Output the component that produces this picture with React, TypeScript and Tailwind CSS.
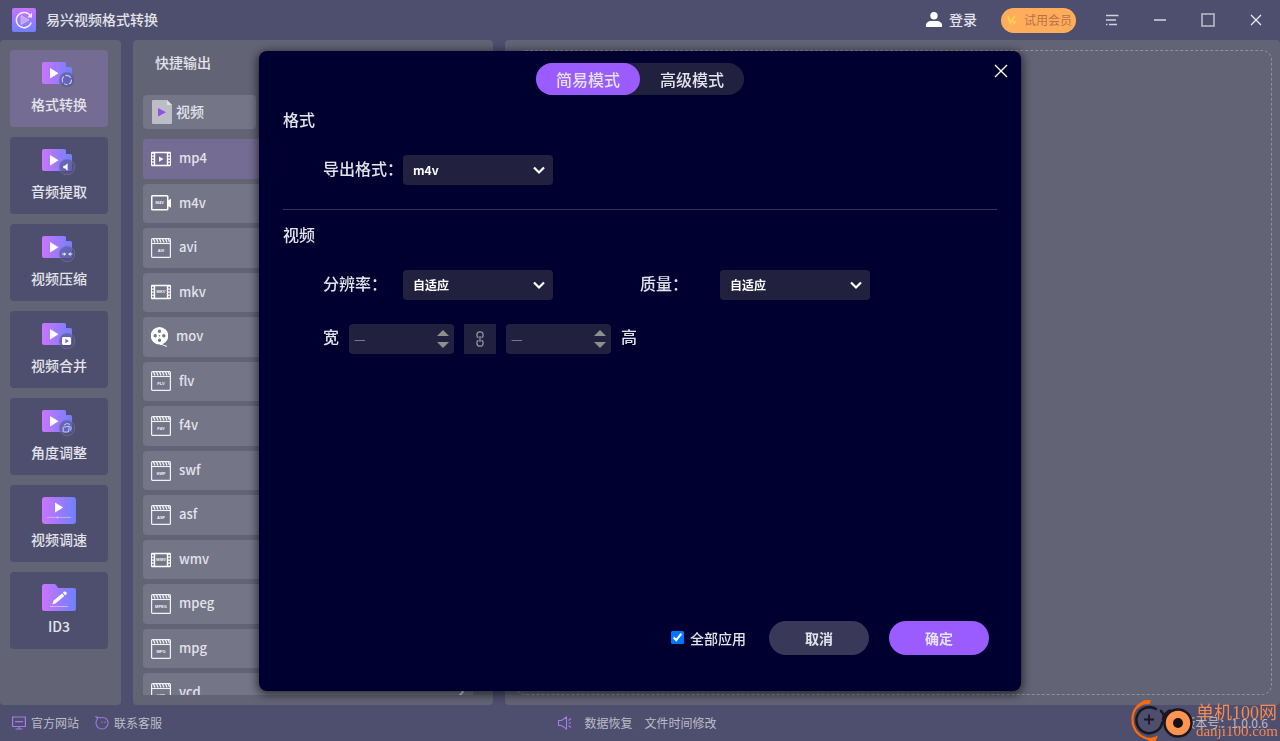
import type { ReactNode } from "react";

type ToolKind = "convert" | "audio" | "compress" | "merge" | "rotate" | "speed" | "tag";
type FormatKind = "play" | "camera" | "clap" | "film" | "reel";

const tools: { label: string; kind: ToolKind }[] = [
  { label: "格式转换", kind: "convert" },
  { label: "音频提取", kind: "audio" },
  { label: "视频压缩", kind: "compress" },
  { label: "视频合并", kind: "merge" },
  { label: "角度调整", kind: "rotate" },
  { label: "视频调速", kind: "speed" },
  { label: "ID3", kind: "tag" },
];

const formats: { name: string; kind: FormatKind; tag: string }[] = [
  { name: "mp4", kind: "play", tag: "" },
  { name: "m4v", kind: "camera", tag: "M4V" },
  { name: "avi", kind: "clap", tag: "AVI" },
  { name: "mkv", kind: "film", tag: "MKV" },
  { name: "mov", kind: "reel", tag: "" },
  { name: "flv", kind: "clap", tag: "FLV" },
  { name: "f4v", kind: "clap", tag: "F4V" },
  { name: "swf", kind: "clap", tag: "SWF" },
  { name: "asf", kind: "clap", tag: "ASF" },
  { name: "wmv", kind: "film", tag: "WMV" },
  { name: "mpeg", kind: "clap", tag: "MPEG" },
  { name: "mpg", kind: "clap", tag: "MPG" },
  { name: "vcd", kind: "clap", tag: "VCD" },
];

function Gradients() {
  return (
    <svg className="absolute size-0" aria-hidden="true">
      <defs>
        <linearGradient id="violet" x1="0" y1="0" x2="1" y2="0">
          <stop offset="0" stopColor="#cb74ff" />
          <stop offset="1" stopColor="#6f80ff" />
        </linearGradient>
        <linearGradient id="violetDown" x1="0" y1="0" x2="0" y2="1">
          <stop offset="0" stopColor="#c873ff" />
          <stop offset="1" stopColor="#6f80ff" />
        </linearGradient>
      </defs>
    </svg>
  );
}

function ToolGlyph({ kind }: { kind: ToolKind }) {
  switch (kind) {
    case "convert":
      return (
        <g fill="none" stroke="#c3ccff" strokeWidth="1.1">
          <path d="M20.9 20.200a4.600 4.600 0 0 1 1-5.700M23.500 13.600a4.600 4.600 0 0 1 5.200 2.200M29.500 17.600a4.600 4.600 0 0 1-2.500 4.500M25.500 22.600a4.600 4.600 0 0 1-3.300-1" />
        </g>
      );
    case "audio":
      return <path d="M21.600 17h1.400l2.300-2.300v6.600L23 19h-1.400z" fill="#fff" stroke="#fff" strokeWidth=".6" />;
    case "compress":
      return (
        <g fill="#dfe3ff">
          <path d="M20 17.600h1.800v-1.300l2.600 1.800-2.600 1.800v-1.300H20z" />
          <path d="M30.400 17.600h-1.800v-1.300L26 18.100l2.600 1.800v-1.300h1.800z" />
        </g>
      );
    case "merge":
      return (
        <g>
          <rect x="20" y="14" width="9" height="8" rx="1.4" fill="#fff" />
          <path d="M23.3 15.8v4.4l3.500-2.200z" fill="#6b6fe0" />
        </g>
      );
    case "rotate":
      return (
        <g fill="none" stroke="#c3cbff" strokeWidth="1">
          <path d="M21.2 17.2l6.200-1-1 5.800h-5.200z" />
          <path d="M22 15.2a4.6 4.6 0 0 1 6-.8M28.8 16.4a4.6 4.6 0 0 1-.3 4" />
        </g>
      );
    default:
      return null;
  }
}

function ToolIcon({ kind }: { kind: ToolKind }) {
  if (kind === "speed") {
    return (
      <svg width="34" height="28" viewBox="0 0 34 28" aria-hidden="true">
        <rect width="34" height="27" rx="3" fill="url(#violet)" />
        <path d="M13 5.500v10l8.200-5z" fill="#fff" />
        <path d="M5 20.500h24" stroke="#c8a8ff" strokeWidth="1" />
        <circle cx="15.500" cy="20.500" r="1" fill="#d9c4ff" />
      </svg>
    );
  }
  if (kind === "tag") {
    return (
      <svg width="34" height="28" viewBox="0 0 34 28" aria-hidden="true">
        <path d="M2.500 0h10.200c1.600 0 2.600 4 4.200 4H32a2 2 0 0 1 2 2v18.500a2.500 2.500 0 0 1-2.500 2.500h-29A2.500 2.500 0 0 1 0 24.500v-22A2.500 2.500 0 0 1 2.500 0z" fill="url(#violet)" />
        <path d="M10.300 20.500l1.200-3.800 8.600-7.300 2.200 2.500-8.500 7.400z" fill="#fff" />
        <path d="M20.900 8.700l1-.9a1.800 1.800 0 0 1 2.400 2.600l-1.200.900z" fill="#fff" />
        <path d="M8 22.500h18" stroke="#cdb4ff" strokeWidth="1" />
      </svg>
    );
  }
  return (
    <svg width="34" height="28" viewBox="0 0 34 28" aria-hidden="true">
      <path d="M2 0h20.500A1.500 1.500 0 0 1 24 1.500V5h4.500A1.500 1.500 0 0 1 30 6.500V20a2 2 0 0 1-2 2H2a2 2 0 0 1-2-2V2a2 2 0 0 1 2-2z" fill="url(#violet)" />
      <path d="M8 6v10.500l8.500-5.200z" fill="#fff" />
      <circle cx="25" cy="18" r="7.800" fill="#55558a" fillOpacity=".62" stroke="#77779c" strokeOpacity=".6" />
      <ToolGlyph kind={kind} />
    </svg>
  );
}

function FormatIcon({ kind, tag }: { kind: FormatKind; tag: string }) {
  const label = (y: number, x = 10) => (
    <text x={x} y={y} fontSize="4" fontWeight="700" textAnchor="middle" fill="#f4f4f8" fontFamily="Liberation Sans, sans-serif">
      {tag}
    </text>
  );
  if (kind === "reel") {
    return (
      <svg width="17" height="20" viewBox="0 0 17 20" className="shrink-0" aria-hidden="true">
        <path
          fillRule="evenodd"
          fill="#fff"
          d="M8.500 0a8.500 8.500 0 1 1 0 17.500 8.500 8.500 0 0 1 0-17.500zM8.500 2.500a1.700 1.700 0 1 0 0 3.400 1.700 1.700 0 0 0 0-3.400zM4.200 7a1.700 1.700 0 1 0 0 3.400A1.700 1.700 0 0 0 4.200 7zM12.800 7a1.700 1.700 0 1 0 0 3.400 1.700 1.700 0 0 0 0-3.400zM8.500 11.500a1.700 1.700 0 1 0 0 3.400 1.700 1.700 0 0 0 0-3.400zM8.500 7.900a.8.8 0 1 0 0 1.600.8.800 0 0 0 0-1.600z"
        />
        <path d="M9 17.300c3 0 4 1.700 7 2" stroke="#fff" strokeWidth="1" fill="none" />
      </svg>
    );
  }
  if (kind === "camera") {
    return (
      <svg width="20" height="16" viewBox="0 0 20 16" className="shrink-0" aria-hidden="true">
        <rect x=".75" y=".75" width="16" height="14" rx=".8" fill="none" stroke="#fff" strokeWidth="1.500" />
        <path d="M17 5.500l3-1.700v9l-3-1.700z" fill="#fff" />
        {label(9.3, 8.7)}
      </svg>
    );
  }
  if (kind === "clap") {
    return (
      <svg width="20" height="20" viewBox="0 0 20 20" className="shrink-0" aria-hidden="true">
        <rect x=".6" y=".6" width="18.800" height="18.800" rx="1" fill="none" stroke="#f2f2f6" strokeWidth="1.200" />
        <path d="M.5 5.500h19" stroke="#f2f2f6" strokeWidth="1.100" />
        <path d="M2.500 1l1.500 3.500M5.500 1L7 4.500M8.500 1l1.500 3.500M11.500 1L13 4.500M14.500 1L16 4.500M17.200 1l1.300 3" stroke="#f2f2f6" strokeWidth="1.300" />
        {label(13.8)}
      </svg>
    );
  }
  return (
    <svg width="20" height="16" viewBox="0 0 20 16" className="shrink-0" aria-hidden="true">
      <path
        fillRule="evenodd"
        fill="#fff"
        d="M1 .8h18a1 1 0 0 1 1 1v12.400a1 1 0 0 1-1 1H1a1 1 0 0 1-1-1V1.800a1 1 0 0 1 1-1zM4.200 2.200v11.600h11.600V2.200zM1 2.800v1.600h1.800V2.800zM1 5.800v1.600h1.800V5.800zM1 8.800v1.600h1.800V8.800zM1 11.800v1.600h1.800v-1.600zM17.200 2.800v1.600H19V2.800zM17.200 5.800v1.600H19V5.800zM17.200 8.800v1.600H19V8.800zM17.200 11.800v1.600H19v-1.600z"
      />
      {kind === "play" ? <path d="M8 5.500v5.200l4.500-2.600z" fill="#fff" /> : label(9.4)}
    </svg>
  );
}

function WindowButton({ label, children }: { label: string; children: ReactNode }) {
  return (
    <button type="button" aria-label={label} className="flex h-10 w-12 items-center justify-center">
      {children}
    </button>
  );
}

function TitleBar() {
  return (
    <header className="flex h-10 shrink-0 items-center pl-3">
      <svg width="24" height="24" viewBox="0 0 24 24" aria-hidden="true">
        <rect width="24" height="24" rx="2" fill="url(#violetDown)" />
        <path d="M18.600 8.200A7.600 7.600 0 1 0 19.200 14.500" fill="none" stroke="#f6eaff" strokeWidth="1.500" />
        <path d="M20 4.800v4.600h-4.600z" fill="#f6eaff" />
        <path d="M9 7.500v9l8-4.500z" fill="#d9bcff" fillOpacity=".65" stroke="#e6d2ff" strokeWidth=".6" />
      </svg>
      <h1 className="ml-[10px] pb-[2px] text-sm font-medium">易兴视频格式转换</h1>
      <div className="ml-auto flex items-center">
        <button type="button" className="mr-6 flex items-center gap-[7px] text-sm font-medium">
          <svg width="16" height="17" viewBox="0 0 16 17" fill="#fff" aria-hidden="true">
            <circle cx="8" cy="3.700" r="3.700" />
            <path d="M0 15v-2c0-2.500 3-4 5-4h6c2 0 5 1.500 5 4v2z" />
          </svg>
          <span className="pb-[2px]">登录</span>
        </button>
        <button type="button" className="mr-3 flex h-[25px] items-center gap-[7px] rounded-full bg-[#ffad5b] pr-1 pl-[6px] text-xs text-[#b9704c]">
          <svg width="10" height="10" viewBox="0 0 10 10" fill="none" stroke="#ffd24e" aria-hidden="true">
            <path d="M1 1l2.300 6.500L8 .8" strokeWidth="2" />
            <path d="M5.500 5.500l3.500 3M6 9l3-3" strokeWidth="1.300" />
          </svg>
          试用会员
        </button>
        <WindowButton label="菜单">
          <svg width="14" height="12" viewBox="0 0 14 12" stroke="#d2d2dc" strokeWidth="1.500" aria-hidden="true">
            <path d="M1 1.500h12.500M1 6h10M1 10.500h1.500M4 10.500h8" />
          </svg>
        </WindowButton>
        <WindowButton label="最小化">
          <svg width="14" height="14" viewBox="0 0 14 14" stroke="#d8d8e0" strokeWidth="1.500" aria-hidden="true">
            <path d="M1 7h12" />
          </svg>
        </WindowButton>
        <WindowButton label="最大化">
          <svg width="14" height="14" viewBox="0 0 14 14" fill="none" stroke="#c0c0cc" strokeWidth="1.500" aria-hidden="true">
            <rect x="1" y="1" width="12" height="12" />
          </svg>
        </WindowButton>
        <WindowButton label="关闭">
          <svg width="12" height="12" viewBox="0 0 12 12" stroke="#f0f0f4" strokeWidth="1.200" aria-hidden="true">
            <path d="M1 1l10 10M11 1L1 11" />
          </svg>
        </WindowButton>
      </div>
    </header>
  );
}

function Sidebar() {
  return (
    <nav className="flex w-[121px] shrink-0 flex-col gap-[10px] rounded bg-[#636376] py-[10px] pr-[13px] pl-[10px]">
      {tools.map((tool, index) => (
        <button
          key={tool.kind}
          type="button"
          className={
            index === 0
              ? "flex h-[77px] flex-col items-center rounded-sm bg-[#756c93] pt-3 text-sm font-medium"
              : "flex h-[77px] flex-col items-center rounded-sm bg-[#4e4e6f] pt-3 text-sm font-medium"
          }
        >
          <ToolIcon kind={tool.kind} />
          <span className="mt-1 leading-5">{tool.label}</span>
        </button>
      ))}
    </nav>
  );
}

function FormatPanel() {
  return (
    <section className="flex w-[360px] shrink-0 flex-col rounded bg-[#636376] px-[10px] pb-[10px]">
      <h2 className="mt-3 ml-3 text-sm leading-5 font-medium">快捷输出</h2>
      <button type="button" className="mt-[23px] flex h-[34px] w-[113px] shrink-0 items-center gap-1 rounded bg-[#757588] pl-[9px] text-sm font-medium">
        <svg width="20" height="24" viewBox="0 0 20 24" aria-hidden="true">
          <path d="M1 0h14l5 5v18a1 1 0 0 1-1 1H1a1 1 0 0 1-1-1V1a1 1 0 0 1 1-1z" fill="#bdbdc8" />
          <path d="M15 0v5h5z" fill="#e0e0e8" />
          <path d="M6 8v8.500l8-4.300z" fill="#9150e6" />
        </svg>
        <span className="pb-[3px]">视频</span>
      </button>
      <div className="mt-[10px] min-h-0 flex-1 overflow-hidden">
        <ul className="mr-[10px] grid h-[574px] auto-rows-fr gap-[5px]">
          {formats.map((format, index) => (
            <li key={format.name} className="flex min-h-0">
              <button
                type="button"
                className={
                  index === 0
                    ? "flex flex-1 items-center gap-2 rounded bg-[#756c93] px-2 text-[13px] font-medium"
                    : "flex flex-1 items-center gap-2 rounded bg-[#757588] px-2 text-[13px] font-medium"
                }
              >
                <FormatIcon kind={format.kind} tag={format.tag} />
                <span className="pb-[2px]">{format.name}</span>
                <svg width="8" height="8" viewBox="0 0 8 8" className="ml-auto" fill="none" stroke="#e3e3ea" strokeWidth="1.500" aria-hidden="true">
                  <path d="M3 0l3 3-4 4" />
                </svg>
              </button>
            </li>
          ))}
        </ul>
      </div>
    </section>
  );
}

function FooterBar() {
  return (
    <footer className="grid h-9 shrink-0 grid-cols-[1fr_auto_1fr] items-center px-3 text-xs text-[#bdbdc7]">
      <div className="flex items-center gap-4">
        <a href="#site" className="flex items-center gap-[5px]">
          <svg width="14" height="14" viewBox="0 0 14 14" fill="none" stroke="#a77ae6" strokeWidth="1.200" aria-hidden="true">
            <path d="M.6 1h12.800v9.500H.6zM3 5.700h8M7 10.500V13M3.500 13h7" />
          </svg>
          官方网站
        </a>
        <a href="#support" className="flex items-center gap-[5px]">
          <svg width="14" height="14" viewBox="0 0 14 14" fill="none" stroke="#a077e0" strokeWidth="1.100" aria-hidden="true">
            <path d="M2.500 3A6 6 0 1 0 11.500 3C9 .8 6 1.500 4.500 1.800L1 .8zM7 5.500v1.500M10 5.500v1.500" />
          </svg>
          联系客服
        </a>
      </div>
      <div className="flex items-center gap-3 pr-[5px]">
        <svg width="14" height="14" viewBox="0 0 14 14" fill="none" stroke="#a77ae6" strokeWidth="1.100" aria-hidden="true">
          <path d="M.5 4.500h3L8.500 1v12l-5-3.500h-3zM10.500 4.500L13 2.500M10.500 7H13M10.500 9.500l2.500 2" />
        </svg>
        <a href="#recovery">数据恢复</a>
        <a href="#time">文件时间修改</a>
      </div>
      <p className="text-right">版本号：1.0.0.6</p>
    </footer>
  );
}

function SelectBox({ id, label, options }: { id: string; label: string; options: string[] }) {
  return (
    <div className="flex items-center">
      <label htmlFor={id} className="w-20 pb-[3px] text-base leading-6 font-medium whitespace-nowrap">
        {label}
      </label>
      <div className="relative">
        <select id={id} className="h-[30px] w-[150px] appearance-none rounded bg-[#22203f] pl-[10px] text-xs font-bold text-white">
          {options.map((option) => (
            <option key={option}>{option}</option>
          ))}
        </select>
        <svg width="12" height="9" viewBox="0 0 12 9" className="pointer-events-none absolute top-[11px] right-2" fill="none" stroke="#fff" strokeWidth="2.200" aria-hidden="true">
          <path d="M1 1.500l5 5 5-5" />
        </svg>
      </div>
    </div>
  );
}

function SizeField({ label }: { label: string }) {
  return (
    <div className="flex h-[30px] w-[105px] items-center rounded-sm bg-[#22203f] pr-1">
      <input
        type="text"
        aria-label={label}
        placeholder="—"
        className="min-w-0 flex-1 bg-transparent pl-[5px] text-[13px] text-white outline-none placeholder:text-[#77768a]"
      />
      <div className="flex flex-col gap-[6px]">
        <button type="button" aria-label={label + "增加"}>
          <svg width="14" height="6" viewBox="0 0 14 6" className="block" fill="#8f8f90" aria-hidden="true">
            <path d="M1 6h12L7 0z" />
          </svg>
        </button>
        <button type="button" aria-label={label + "减少"}>
          <svg width="14" height="6" viewBox="0 0 14 6" className="block" fill="#8f8f90" aria-hidden="true">
            <path d="M1 0h12L7 6z" />
          </svg>
        </button>
      </div>
    </div>
  );
}

function SettingsDialog() {
  return (
    <div className="fixed inset-0 flex items-center justify-center">
      <div role="dialog" aria-label="输出设置" className="relative flex min-h-[640px] w-full max-w-[762px] flex-col rounded-lg bg-[#000030] px-6 pt-3 pb-9 shadow-[0_2px_8px_2px_rgba(0,0,0,0.55)]">
        <button type="button" aria-label="关闭" className="absolute top-3 right-3 flex size-4 items-center justify-center">
          <svg width="14" height="14" viewBox="0 0 14 14" stroke="#fff" strokeWidth="1.400" aria-hidden="true">
            <path d="M1 1l12 12M13 1L1 13" />
          </svg>
        </button>
        <div className="flex self-center rounded-full bg-[#22203f] text-base font-medium">
          <button type="button" className="h-8 w-[104px] rounded-full bg-[#9b5cff]">简易模式</button>
          <button type="button" className="h-8 w-[104px] rounded-full">高级模式</button>
        </div>

        <h3 className="mt-3 text-base leading-6 font-medium">格式</h3>
        <div className="mt-6 pl-10">
          <SelectBox id="output-format" label="导出格式：" options={["m4v", "mp4", "avi"]} />
        </div>

        <hr className="mt-6 border-[#35335a]" />

        <h3 className="mt-3 text-base leading-6 font-medium">视频</h3>
        <div className="mt-6 flex gap-[87px] pl-10">
          <SelectBox id="resolution" label="分辨率：" options={["自适应", "1920×1080", "1280×720"]} />
          <SelectBox id="quality" label="质量：" options={["自适应", "高", "中", "低"]} />
        </div>
        <div className="mt-6 flex items-center gap-[10px] pl-10 text-base leading-6 font-medium">
          <span className="pb-[5px]">宽</span>
          <SizeField label="宽" />
          <button type="button" aria-label="锁定比例" className="flex h-[30px] w-8 items-center justify-center bg-[#22203f]">
            <svg width="8" height="16" viewBox="0 0 8 16" fill="none" stroke="#9494a0" strokeWidth="1.300" aria-hidden="true">
              <path d="M2.500 6.500C1.500 6.300 1 5.700 1 5V3.500C1 1.800 2 .8 4 .8s3 1 3 2.700V5c0 .7-.5 1.300-1.500 1.500M2.500 9.500C1.500 9.700 1 10.300 1 11v1.500c0 1.700 1 2.700 3 2.700s3-1 3-2.700V11c0-.7-.5-1.300-1.500-1.500M4 5v6" />
            </svg>
          </button>
          <SizeField label="高" />
          <span className="pb-[5px]">高</span>
        </div>

        <div className="mt-auto flex items-center justify-end pr-2 text-sm">
          <label className="flex items-center gap-[6px] font-medium">
            <input type="checkbox" defaultChecked className="size-[13px]" />
            全部应用
          </label>
          <button type="button" className="ml-[23px] h-[34px] w-[100px] rounded-full bg-[#3a3859] font-bold">取消</button>
          <button type="button" className="ml-5 h-[34px] w-[100px] rounded-full bg-[#9b5cff] font-bold">确定</button>
        </div>
      </div>
    </div>
  );
}

function Watermark() {
  return (
    <div className="pointer-events-none fixed right-0 bottom-0 flex items-center gap-px pr-[2px] text-[#f5894f]">
      <svg width="64" height="41" viewBox="0 0 64 41" fill="none" aria-hidden="true">
        <path d="M18 1.500C8 1 1.500 10 1.500 19.500 1.500 30 9 38.500 20 39" stroke="#ff6a0a" strokeWidth="2.200" />
        <path d="M7 5c5-5 9-6 13-4.500L18.500 4C14 3.500 10 5 6 9zM11 36c5 3 10 2.500 16-.500L24.500 41H18z" fill="#ff6a0a" />
        <path d="M25 9A13 13 0 1 0 31 23.500M30 11c3.500 3 4 8 1 12.500M32 19c1-4 4-7 7-8.500" stroke="#1b1720" strokeWidth="2.600" strokeLinecap="round" />
        <circle cx="47" cy="23" r="13.500" fill="#ff9450" stroke="#1b1720" strokeWidth="2.500" />
        <circle cx="47" cy="23" r="5" fill="#14101a" />
        <path d="M18 14.500v10M13 19.500h10" stroke="#1b1720" strokeWidth="1.800" />
      </svg>
      <div className="font-['Liberation_Serif','Noto_Sans_CJK_SC',serif]">
        <p className="text-lg leading-5">单机100网</p>
        <p className="text-[15px] leading-4">danji100.com</p>
      </div>
    </div>
  );
}

export default function App() {
  return (
    <div className="flex h-screen flex-col overflow-hidden bg-[#4e4e6f] font-['Noto_Sans_CJK_SC',sans-serif] text-[#e3e3ea]">
      <Gradients />
      <TitleBar />
      <div className="flex min-h-0 flex-1 gap-3">
        <Sidebar />
        <FormatPanel />
        <main className="flex flex-1 rounded bg-[#636376] py-[10px] pr-2 pl-[10px]">
          <div className="flex-1 rounded-[10px] border border-dashed border-[#8f8fa0]" />
        </main>
      </div>
      <FooterBar />
      <SettingsDialog />
      <Watermark />
    </div>
  );
}
